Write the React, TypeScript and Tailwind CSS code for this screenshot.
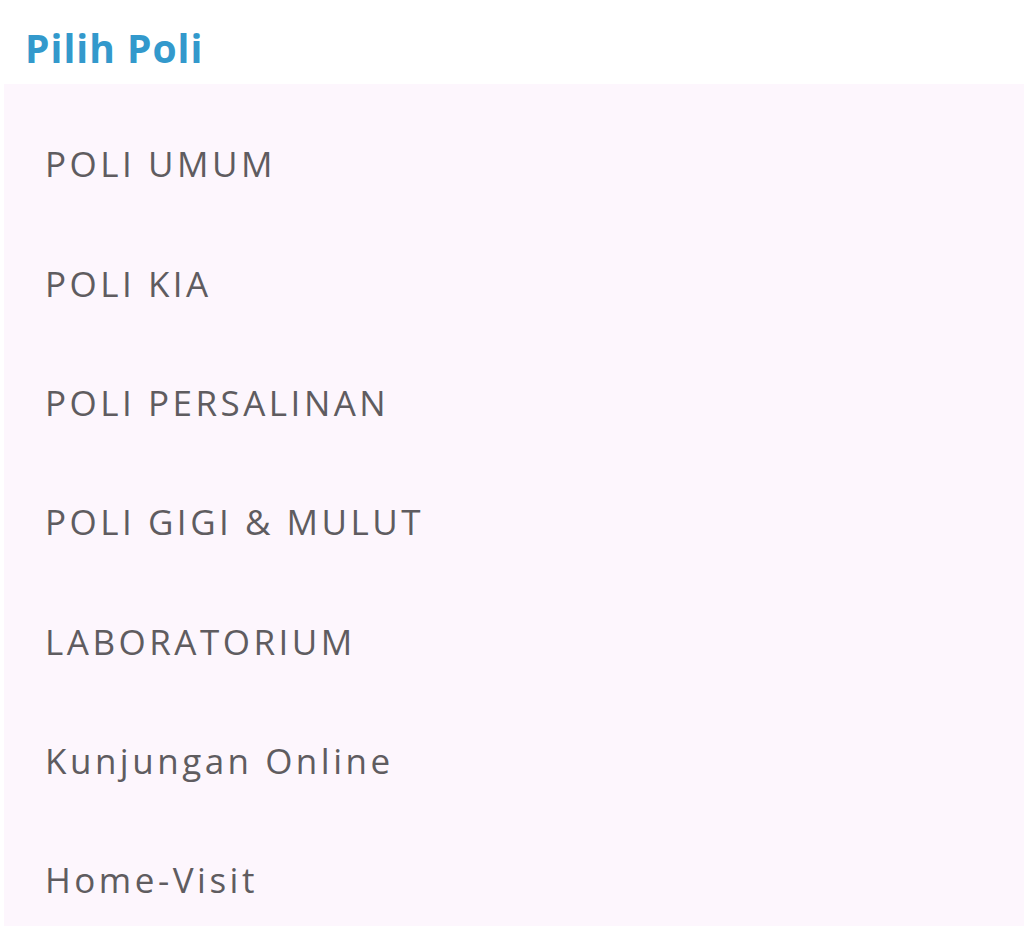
import React from "react";

const items = [
  "POLI UMUM",
  "POLI KIA",
  "POLI PERSALINAN",
  "POLI GIGI & MULUT",
  "LABORATORIUM",
  "Kunjungan Online",
  "Home-Visit",
];

export default function App() {
  return (
    <div className="w-[1024px] h-[926px] bg-white overflow-hidden" style={{ fontFamily: '"Open Sans", "Liberation Sans", sans-serif' }}>
      <div className="h-[84px] pl-[25px] pt-[24px]">
        <div className="text-[39px] leading-[48px] font-bold text-[#3399cc] tracking-[1px]">Pilih Poli</div>
      </div>
      <div className="ml-[4px] h-[842px] bg-[#fdf6fd] pt-[21px]">
        {items.map((t) => (
          <div key={t} className="h-[119.33px] flex items-center pl-[41px]">
            <span className="text-[35px] text-[#5f5c60] tracking-[3.5px]">{t}</span>
          </div>
        ))}
      </div>
    </div>
  );
}
